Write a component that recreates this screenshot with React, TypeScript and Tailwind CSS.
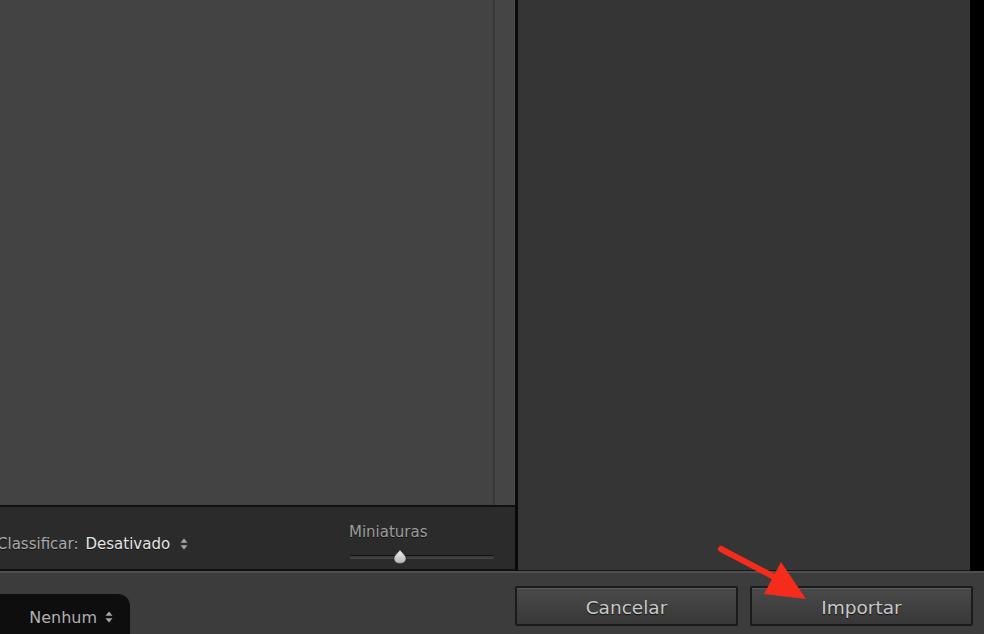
import type { ReactNode } from "react";

const font = { fontFamily: '"DejaVu Sans", "Liberation Sans", sans-serif' };

function UpDown({ className }: { className: string }) {
  return (
    <svg viewBox="0 0 8 12" className={className} fill="currentColor">
      <path d="M4 0.5 L7.5 4.8 H0.5 Z" />
      <path d="M4 11.5 L7.5 7.2 H0.5 Z" />
    </svg>
  );
}

function Thumbs() {
  return (
    <div className="mt-[12px] flex flex-col items-start">
      <span className="-ml-[1px] text-[15px] leading-none text-[#9c9c9c] [text-shadow:0_1px_0_#111]">
        Miniaturas
      </span>
      <div className="relative mt-[9px] h-[14px] w-[144px]">
        <div className="absolute inset-x-0 top-[6px] h-[3px] rounded-full border-t border-[#111] bg-[#3a3a3a] shadow-[0_1px_0_#474747]" />
        <svg viewBox="0 0 14 15" className="absolute left-[43px] top-0 h-[15px] w-[14px]">
          <defs>
            <linearGradient id="thumb" x1="0" y1="0" x2="0" y2="1">
              <stop offset="0" stopColor="#f0f0f0" />
              <stop offset="1" stopColor="#b5b5b5" />
            </linearGradient>
          </defs>
          <path
            d="M7 0.5 C8 3 13 6 13 9.5 C13 12.5 10.5 14.5 7 14.5 C3.5 14.5 1 12.5 1 9.5 C1 6 6 3 7 0.5 Z"
            fill="url(#thumb)"
            stroke="#222"
            strokeWidth="0.6"
          />
        </svg>
      </div>
    </div>
  );
}

function Button({ children }: { children: ReactNode }) {
  return (
    <button className="flex h-[40px] w-[223px] items-center justify-center rounded-[2px] border-2 border-[#1b1b1b] bg-gradient-to-b from-[#4a4a4a] to-[#383838] pt-[3px] text-[18.5px] text-[#c9c9c9] shadow-[inset_0_1px_0_#5a5a5a] [text-shadow:0_1px_1px_#111]">
      {children}
    </button>
  );
}

export default function App() {
  return (
    <div style={font} className="relative flex h-[634px] w-[984px] flex-col overflow-hidden bg-black">
      <div className="flex h-[573px]">
        <div className="flex w-[515px] flex-col">
          <div className="flex flex-1">
            <div className="flex-1 bg-[#434343]" />
            <div className="w-[22px] border-l-2 border-r border-[#383838] border-r-[#505050] bg-gradient-to-r from-[#464646] to-[#444444]" />
          </div>
          <div className="flex h-[66px] items-center justify-between border-y-2 border-[#111] bg-[#2b2b2b] pr-[21px]">
            <div className="-ml-[3px] mt-[12px] flex items-center text-[15px] [text-shadow:0_1px_0_#111]">
              <span className="text-[#a9a9a9]">Classificar:</span>
              <span className="ml-[7px] text-[#e4e4e4]">Desativado</span>
              <UpDown className="ml-[10px] h-[12px] w-[8px] text-[#a5a5a5]" />
            </div>
            <Thumbs />
          </div>
        </div>
        <div className="w-[3px] bg-[#0a0a0a]" />
        <div className="w-[452px] border-b border-[#161616] bg-[#353535]" />
        <div className="flex-1 bg-black" />
      </div>
      <div className="flex flex-1 border-t-2 border-[#4f4f4f] bg-[#3c3c3c]">
        <div className="mt-[21px] flex h-[40px] w-[130px] items-start justify-end rounded-tr-[12px] bg-[#0e0e0e] pr-[17px] pt-[16px]">
          <span className="text-[16px] leading-none text-[#b0b0b0]">Nenhum</span>
          <UpDown className="ml-[8px] mt-[1px] h-[12px] w-[8px] text-[#a5a5a5]" />
        </div>
        <div className="ml-auto mr-[11px] mt-[13px] flex gap-[12px]">
          <Button>Cancelar</Button>
          <Button>Importar</Button>
        </div>
      </div>
      <svg className="pointer-events-none absolute inset-0 h-[634px] w-[984px]" viewBox="0 0 984 634">
        <line x1="721" y1="549" x2="782" y2="581" stroke="#f52b1c" strokeWidth="6" strokeLinecap="round" />
        <polygon points="764,594 781,562 806,599" fill="#f52b1c" />
      </svg>
    </div>
  );
}
